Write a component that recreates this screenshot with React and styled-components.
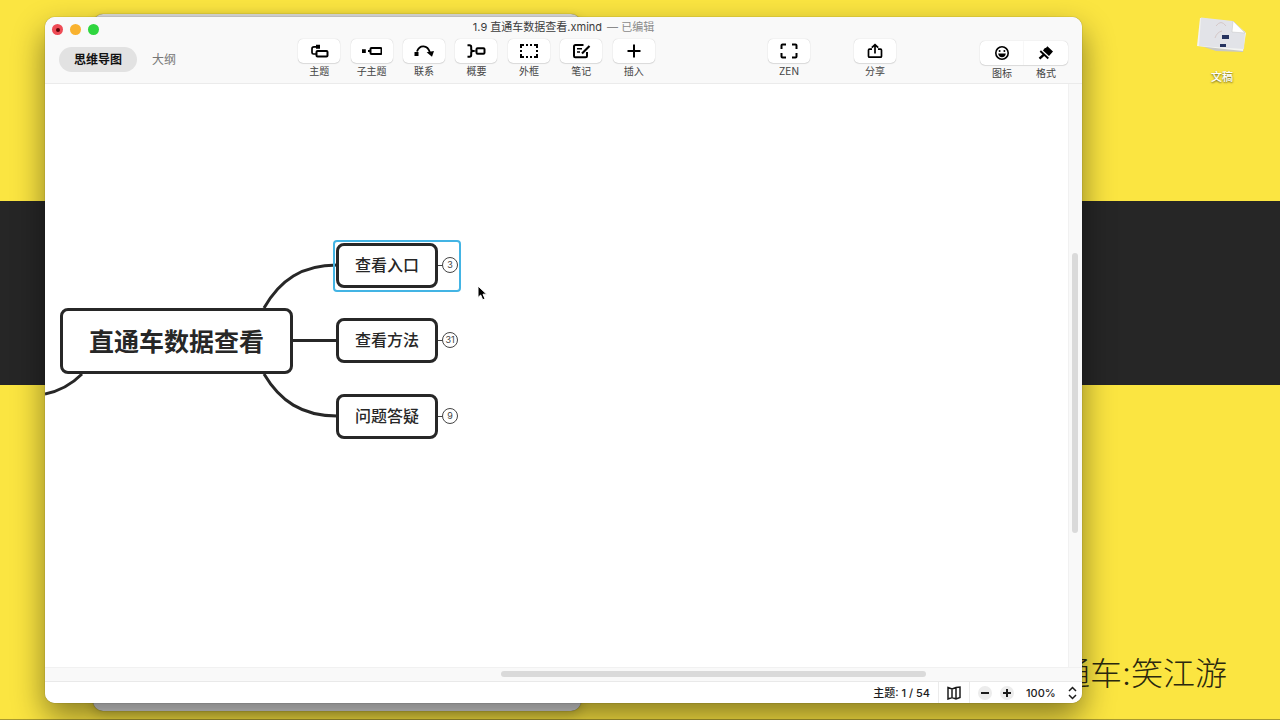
import React, { useState } from 'react';
import styled, { createGlobalStyle, css } from 'styled-components';

const GlobalStyle = createGlobalStyle`
  * {
    box-sizing: border-box;
  }
  body {
    margin: 0;
    overflow: hidden;
    font-family: Inter, "Noto Sans CJK SC", sans-serif;
  }
  button, select {
    font-family: inherit;
    color: inherit;
    border: 0;
    padding: 0;
    margin: 0;
    background: none;
  }
  svg {
    display: block;
  }
`;

/* ---------- desktop ---------- */

const Desktop = styled.div`
  position: relative;
  min-height: 100vh;
  overflow: hidden;
`;

const Wallpaper = styled.div`
  position: absolute;
  inset: 0;
  display: grid;
  grid-template-rows: 201fr 184fr 334fr;
  background: #fbe541;
  border-bottom: 1px solid #a8992f;
`;

const Band = styled.div`
  grid-row: 2;
  background: #262626;
`;

const Watermark = styled.div`
  position: absolute;
  right: 53px;
  bottom: 22px;
  font-size: 32px;
  line-height: 48px;
  font-weight: 300;
  color: #2a280f;
  white-space: nowrap;
`;

const DesktopItem = styled.div`
  position: absolute;
  top: 14px;
  right: 28px;
  width: 60px;
  display: flex;
  flex-direction: column;
  align-items: center;
  gap: 13px;
  font-size: 11px;
  line-height: 16px;
  font-weight: 500;
  color: #fff;
  text-shadow: 0 1px 2px rgba(0, 0, 0, 0.6);
`;

const BackWindow = styled.div`
  position: absolute;
  left: 93px;
  top: 14px;
  bottom: 9px;
  width: 488px;
  border-radius: 10px;
  background: #dcdcdc;
  box-shadow: 0 0 1px rgba(0, 0, 0, 0.6), 0 4px 12px rgba(0, 0, 0, 0.2);
`;

const Window = styled.div`
  position: absolute;
  left: 45px;
  right: 198px;
  top: 17px;
  bottom: 17px;
  display: flex;
  flex-direction: column;
  border-radius: 10px;
  overflow: hidden;
  background: #fff;
  box-shadow: 0 0 1px rgba(0, 0, 0, 0.6), 0 14px 32px rgba(0, 0, 0, 0.46);
`;

/* ---------- header ---------- */

const Header = styled.header`
  background: #f9f9f9;
  border-bottom: 1px solid #ebebeb;
  height: 67px;
`;

const TitleBar = styled.div`
  display: grid;
  grid-template-columns: 1fr auto 1fr;
  align-items: start;
  height: 22px;
  padding: 0 7px;
`;

const Lights = styled.div`
  display: flex;
  gap: 7px;
  padding-top: 7px;
`;

const Light = styled.button`
  width: 11px;
  height: 11px;
  border-radius: 50%;
  background: ${(props) => props.$color};
  display: grid;
  place-items: center;
`;

const UnsavedDot = styled.span`
  width: 4px;
  height: 4px;
  border-radius: 50%;
  background: #5c0508;
`;

const Title = styled.div`
  display: flex;
  gap: 5px;
  font-size: 11px;
  line-height: 20px;
  color: #3c3c3c;
`;

const Edited = styled.span`
  color: #8a8a8a;
`;

const Toolbar = styled.div`
  display: flex;
  align-items: flex-start;
  padding: 0 14px;
`;

const Tabs = styled.div`
  display: flex;
  width: 234px;
  padding-top: 8px;
`;

const Tab = styled.button`
  height: 25px;
  padding: 0 15px;
  border-radius: 13px;
  font-size: 12px;
  line-height: 25px;
  color: #777;
  ${(props) => props.$active && css`
    background: #e2e2e2;
    color: #111;
    font-weight: 700;
  `}
`;

const Tools = styled.div`
  display: grid;
  grid-template-columns: repeat(7, 1fr);
  width: 367px;
`;

const Spacer = styled.div`
  flex: ${(props) => props.$grow} 1 0;
`;

const ToolButton = styled.button`
  display: flex;
  flex-direction: column;
  align-items: center;
  gap: 1px;
  font-size: 10px;
  line-height: 14px;
  color: #444;
`;

const Face = styled.span`
  display: grid;
  place-items: center;
  width: 42px;
  height: 24px;
  border-radius: 5px;
  background: #fff;
  color: #000;
  box-shadow: 0 0 1px rgba(0, 0, 0, 0.25), 0 1px 1px rgba(0, 0, 0, 0.1);
`;

const Pair = styled.div`
  display: grid;
  grid-template-columns: 1fr 1fr;
  width: 88px;
  padding-top: 2px;

  ${Face} {
    width: 100%;
  }
  ${ToolButton}:first-child ${Face} {
    border-radius: 5px 0 0 5px;
  }
  ${ToolButton}:last-child ${Face} {
    border-radius: 0 5px 5px 0;
  }
`;

/* ---------- canvas ---------- */

const Body = styled.main`
  flex: 1;
  display: grid;
  grid-template-columns: 1fr 14px;
  grid-template-rows: 1fr 14px;
  min-height: 0;
`;

const Canvas = styled.div`
  position: relative;
  overflow: hidden;
  background: #fff;
`;

const Lines = styled.svg`
  position: absolute;
  left: 0;
  top: 0;
`;

const Node = styled.div`
  position: absolute;
  left: ${(props) => props.$x}px;
  top: ${(props) => props.$y}px;
  display: grid;
  place-items: center;
  width: ${(props) => (props.$root ? 233 : 102)}px;
  height: ${(props) => (props.$root ? 66 : 45)}px;
  padding-bottom: 3px;
  border: 3px solid #272727;
  border-radius: 8px;
  background: #fff;
  color: #272727;
  font-family: "Noto Sans CJK SC", sans-serif;
  font-size: ${(props) => (props.$root ? 25 : 16)}px;
  line-height: 24px;
  font-weight: ${(props) => (props.$root ? 700 : 500)};
  white-space: nowrap;
`;

const Selection = styled.div`
  position: absolute;
  left: 288px;
  top: 156px;
  width: 128px;
  height: 52px;
  border: 2px solid #43b4e4;
  border-radius: 4px;
`;

const Count = styled.button`
  position: absolute;
  left: 397px;
  top: ${(props) => props.$y}px;
  width: 16px;
  height: 16px;
  border: 1px solid #444;
  border-radius: 50%;
  background: #fff;
  color: #444;
  font-size: 9px;
  line-height: 14px;
  text-align: center;
`;

const Pointer = styled.svg`
  position: absolute;
  left: 432px;
  top: 201px;
`;

const Track = styled.div`
  position: relative;
  background: #f9f9f9;
  ${(props) => (props.$vertical
    ? css`border-left: 1px solid #f1f1f1;`
    : css`
      grid-column: 1 / -1;
      border-top: 1px solid #f1f1f1;
    `)}
`;

const Thumb = styled.div`
  position: absolute;
  border-radius: 3px;
  background: #dadada;
  ${(props) => (props.$vertical
    ? css`
      left: 3px;
      width: 6px;
      top: 29%;
      height: 48%;
    `
    : css`
      top: 3px;
      height: 6px;
      left: 44%;
      width: 41%;
    `)}
`;

/* ---------- status bar ---------- */

const StatusBar = styled.footer`
  display: flex;
  justify-content: flex-end;
  height: 22px;
  border-top: 1px solid #e9e9e9;
  background: #fff;
  font-size: 11px;
  line-height: 22px;
  font-weight: 500;
  color: #1c1c1c;
`;

const StatusCell = styled.div`
  display: flex;
  align-items: center;
  justify-content: center;
  gap: 8px;
  padding: 0 8px;
  border-left: ${(props) => (props.$divided ? '1px solid #ebebeb' : '0')};
`;

const ZoomButton = styled.button`
  width: 14px;
  height: 14px;
  border-radius: 50%;
  background: #ececec;
  display: grid;
  place-items: center;
`;

const ZoomLabel = styled.label`
  display: flex;
  align-items: center;
  gap: 9px;
  padding: 0 5px 0 4px;
`;

const ZoomSelect = styled.select`
  appearance: none;
  width: 33px;
  height: 20px;
  font-size: 11px;
  font-weight: 500;
  outline: none;
`;

const Icon = ({ w = 20, h = 16, sw = 2, children }) => (
  <svg
    width={w}
    height={h}
    viewBox={`0 0 ${w} ${h}`}
    fill="none"
    stroke="currentColor"
    strokeWidth={sw}
    aria-hidden="true"
  >
    {children}
  </svg>
);

const icons = {
  topic: (
    <Icon>
      <path d="M8 3.8H5Q3 3.8 3 5.8V9.500Q3 11 4.5 11H7" strokeWidth="1.7" />
      <path d="M7 1.8h4v4H7z" fill="currentColor" stroke="none" />
      <rect x="7.5" y="8" width="11" height="5.5" rx="1" />
    </Icon>
  ),
  subtopic: (
    <Icon>
      <path d="M0 6.200h3.8V10H0z" fill="currentColor" stroke="none" />
      <path d="M6 8h3" />
      <rect x="8.5" y="5" width="11" height="6" rx="1" />
    </Icon>
  ),
  relation: (
    <Icon>
      <path d="M0.5 9h4v4h-4z" fill="currentColor" stroke="none" />
      <path d="M3 8.500C5.5 1.5 13.5 1.5 16 9.5" strokeWidth="1.9" />
      <path d="M12.6 9.200 20 8l-2 5.800z" fill="currentColor" stroke="none" />
    </Icon>
  ),
  summary: (
    <Icon>
      <path d="M1.5 2.200h2q1.700 0 1.700 1.700v2.400q0 1.700 1.800 1.700q-1.800 0-1.800 1.700v2.400q0 1.700-1.700 1.700h-2" />
      <path d="M6 8h2.500" />
      <rect x="10.500" y="5.300" width="8" height="5.400" rx="1" />
      <path d="M8 8h2" strokeWidth="1" />
    </Icon>
  ),
  boundary: (
    <Icon>
      <path d="M2 5V2h3M7 2h2M11 2h2M15 2h3v3M18 7v2M18 11v3h-3M13 14h-2M9 14H7M5 14H2v-3M2 9V7" />
    </Icon>
  ),
  note: (
    <Icon>
      <path d="M12.500 2H4.500Q3 2 3 3.500V13q0 1.200 1.200 1.200h10.300q1.500 0 1.500-1.500V9" />
      <path d="M6 5.800h5M6 9h3" strokeWidth="1.600" />
      <path d="M11 10.500 18.500 3" strokeWidth="2.200" />
    </Icon>
  ),
  insert: <Icon><path d="M10 1.500v13M3.500 8h13" /></Icon>,
  zen: (
    <Icon>
      <path d="M2.500 6V2.500q0-1 1-1H7M13 1.500h3.500q1 0 1 1V6M17.500 10v3.500q0 1-1 1H13M7 14.500H3.500q-1 0-1-1V10" />
    </Icon>
  ),
  share: (
    <Icon>
      <path d="M7 6.200H4.500q-1 0-1 1V13.200q0 1 1 1h11q1 0 1-1V7.200q0-1-1-1H13" strokeWidth="1.700" />
      <path d="M10 10.500V2M6.800 4.700 10 1.600l3.200 3.100" strokeWidth="1.700" />
    </Icon>
  ),
  smile: (
    <Icon>
      <circle cx="10" cy="8" r="6.200" strokeWidth="1.600" />
      <circle cx="7.600" cy="6" r="1" fill="currentColor" stroke="none" />
      <circle cx="12.400" cy="6" r="1" fill="currentColor" stroke="none" />
      <path d="M6.200 8.500h7.600q-.4 3.700-3.800 3.700T6.200 8.500z" fill="currentColor" stroke="none" />
    </Icon>
  ),
  brush: (
    <Icon>
      <path d="m8.600 3.200 1.500-.4 1.300-1.600 5.600 5.200-4 4.600-6-5.600z" fill="currentColor" stroke="none" />
      <path d="m4.300 6 8 7.500" strokeWidth="1.800" />
      <path d="m8.200 9.400-4.700 4.300" strokeWidth="2.400" />
    </Icon>
  ),
};

const tools = [
  ['主题', 'topic'],
  ['子主题', 'subtopic'],
  ['联系', 'relation'],
  ['概要', 'summary'],
  ['外框', 'boundary'],
  ['笔记', 'note'],
  ['插入', 'insert'],
];

const branches = [
  { text: '查看入口', count: 3, y: 159 },
  { text: '查看方法', count: 31, y: 234 },
  { text: '问题答疑', count: 9, y: 310 },
];

function Tool({ label, icon }) {
  return (
    <ToolButton type="button">
      <Face>{icons[icon]}</Face>
      {label}
    </ToolButton>
  );
}

function MindMap() {
  return (
    <Canvas>
      <Lines width="460" height="400" fill="none" stroke="#272727" strokeWidth="3">
        <path d="M219 224C235 196 257 181 292 181" />
        <path d="M247 256.500H292" />
        <path d="M219 290C235 317 257 332 292 332" />
        <path d="M37 290C27 300 15 307 0 310" />
        {branches.map((b) => (
          <path key={b.text} d={`M392 ${b.y + 22.5}h6`} stroke="#444" strokeWidth="1" />
        ))}
      </Lines>
      <Node $root $x={15} $y={224}>直通车数据查看</Node>
      {branches.map((b) => (
        <React.Fragment key={b.text}>
          <Node $x={291} $y={b.y}>{b.text}</Node>
          <Count type="button" $y={b.y + 14}>{b.count}</Count>
        </React.Fragment>
      ))}
      <Selection />
      <Pointer width="12" height="17" viewBox="0 0 12 17">
        <path
          d="M1 1v11.500l2.700-2.500 2 4.800 2.300-1-2-4.600h3.700z"
          fill="#000"
          stroke="#fff"
          strokeWidth="1"
        />
      </Pointer>
    </Canvas>
  );
}

function App() {
  const [tab, setTab] = useState('思维导图');
  const [zoom, setZoom] = useState('100%');

  return (
    <Desktop>
      <GlobalStyle />
      <Wallpaper><Band /></Wallpaper>
      <Watermark>通车:笑江游</Watermark>
      <DesktopItem>
        <svg width="54" height="42" viewBox="0 0 54 42" aria-hidden="true">
          <path d="M3 31 7 10l43 7-2 21-27-1z" fill="#c9c9c2" />
          <path d="M2 32 5 4l34 4 12 11-3 18z" fill="#f4f4f2" />
          <path d="M6 3.500 38 7l12 12-1 16-45-3z" fill="#e2e3e8" />
          <path d="m38 7-1 11 13 1z" fill="#fff" stroke="#c4c4c4" strokeWidth="0.500" />
          <path d="M21 12q5-7 10 0M20 24q2-6 7-7" stroke="#d5c8c8" fill="none" />
          <path d="M27 21h7v4h-7zM25 30h6v3h-6z" fill="#26335f" />
        </svg>
        文稿
      </DesktopItem>
      <BackWindow />
      <Window>
        <Header>
          <TitleBar>
            <Lights>
              <Light type="button" aria-label="关闭" $color="#ee4b55"><UnsavedDot /></Light>
              <Light type="button" aria-label="最小化" $color="#f9b22f" />
              <Light type="button" aria-label="缩放" $color="#2fd63f" />
            </Lights>
            <Title>
              <span>1.9 直通车数据查看.xmind</span>
              <Edited>— 已编辑</Edited>
            </Title>
          </TitleBar>
          <Toolbar>
            <Tabs>
              {['思维导图', '大纲'].map((t) => (
                <Tab key={t} type="button" $active={t === tab} onClick={() => setTab(t)}>{t}</Tab>
              ))}
            </Tabs>
            <Tools>
              {tools.map(([label, icon]) => <Tool key={icon} label={label} icon={icon} />)}
            </Tools>
            <Spacer $grow={27} />
            <Tool label="ZEN" icon="zen" />
            <Spacer $grow={11} />
            <Tool label="分享" icon="share" />
            <Spacer $grow={21} />
            <Pair>
              <Tool label="图标" icon="smile" />
              <Tool label="格式" icon="brush" />
            </Pair>
          </Toolbar>
        </Header>
        <Body>
          <MindMap />
          <Track $vertical><Thumb $vertical /></Track>
          <Track><Thumb /></Track>
        </Body>
        <StatusBar>
          <StatusCell>主题: 1 / 54</StatusCell>
          <StatusCell $divided>
            <Icon w={14} h={14} sw={1.5}>
              <path d="M1 1.500 5 3l4-1.500L13 1v10.500L9 13l-4-1.500L1 13zM5 2.500V12M9 2v11" />
            </Icon>
          </StatusCell>
          <StatusCell $divided>
            <ZoomButton type="button" aria-label="缩小">
              <Icon w={8} h={8}><path d="M0 4h8" /></Icon>
            </ZoomButton>
            <ZoomButton type="button" aria-label="放大">
              <Icon w={8} h={8}><path d="M0 4h8M4 0v8" /></Icon>
            </ZoomButton>
          </StatusCell>
          <ZoomLabel>
            <ZoomSelect aria-label="缩放比例" value={zoom} onChange={(e) => setZoom(e.target.value)}>
              <option>50%</option>
              <option>100%</option>
              <option>200%</option>
            </ZoomSelect>
            <Icon w={9} h={14} sw={1.5}><path d="M1 5l3.500-3.500L8 5M1 9l3.500 3.500L8 9" /></Icon>
          </ZoomLabel>
        </StatusBar>
      </Window>
    </Desktop>
  );
}

export default App;
